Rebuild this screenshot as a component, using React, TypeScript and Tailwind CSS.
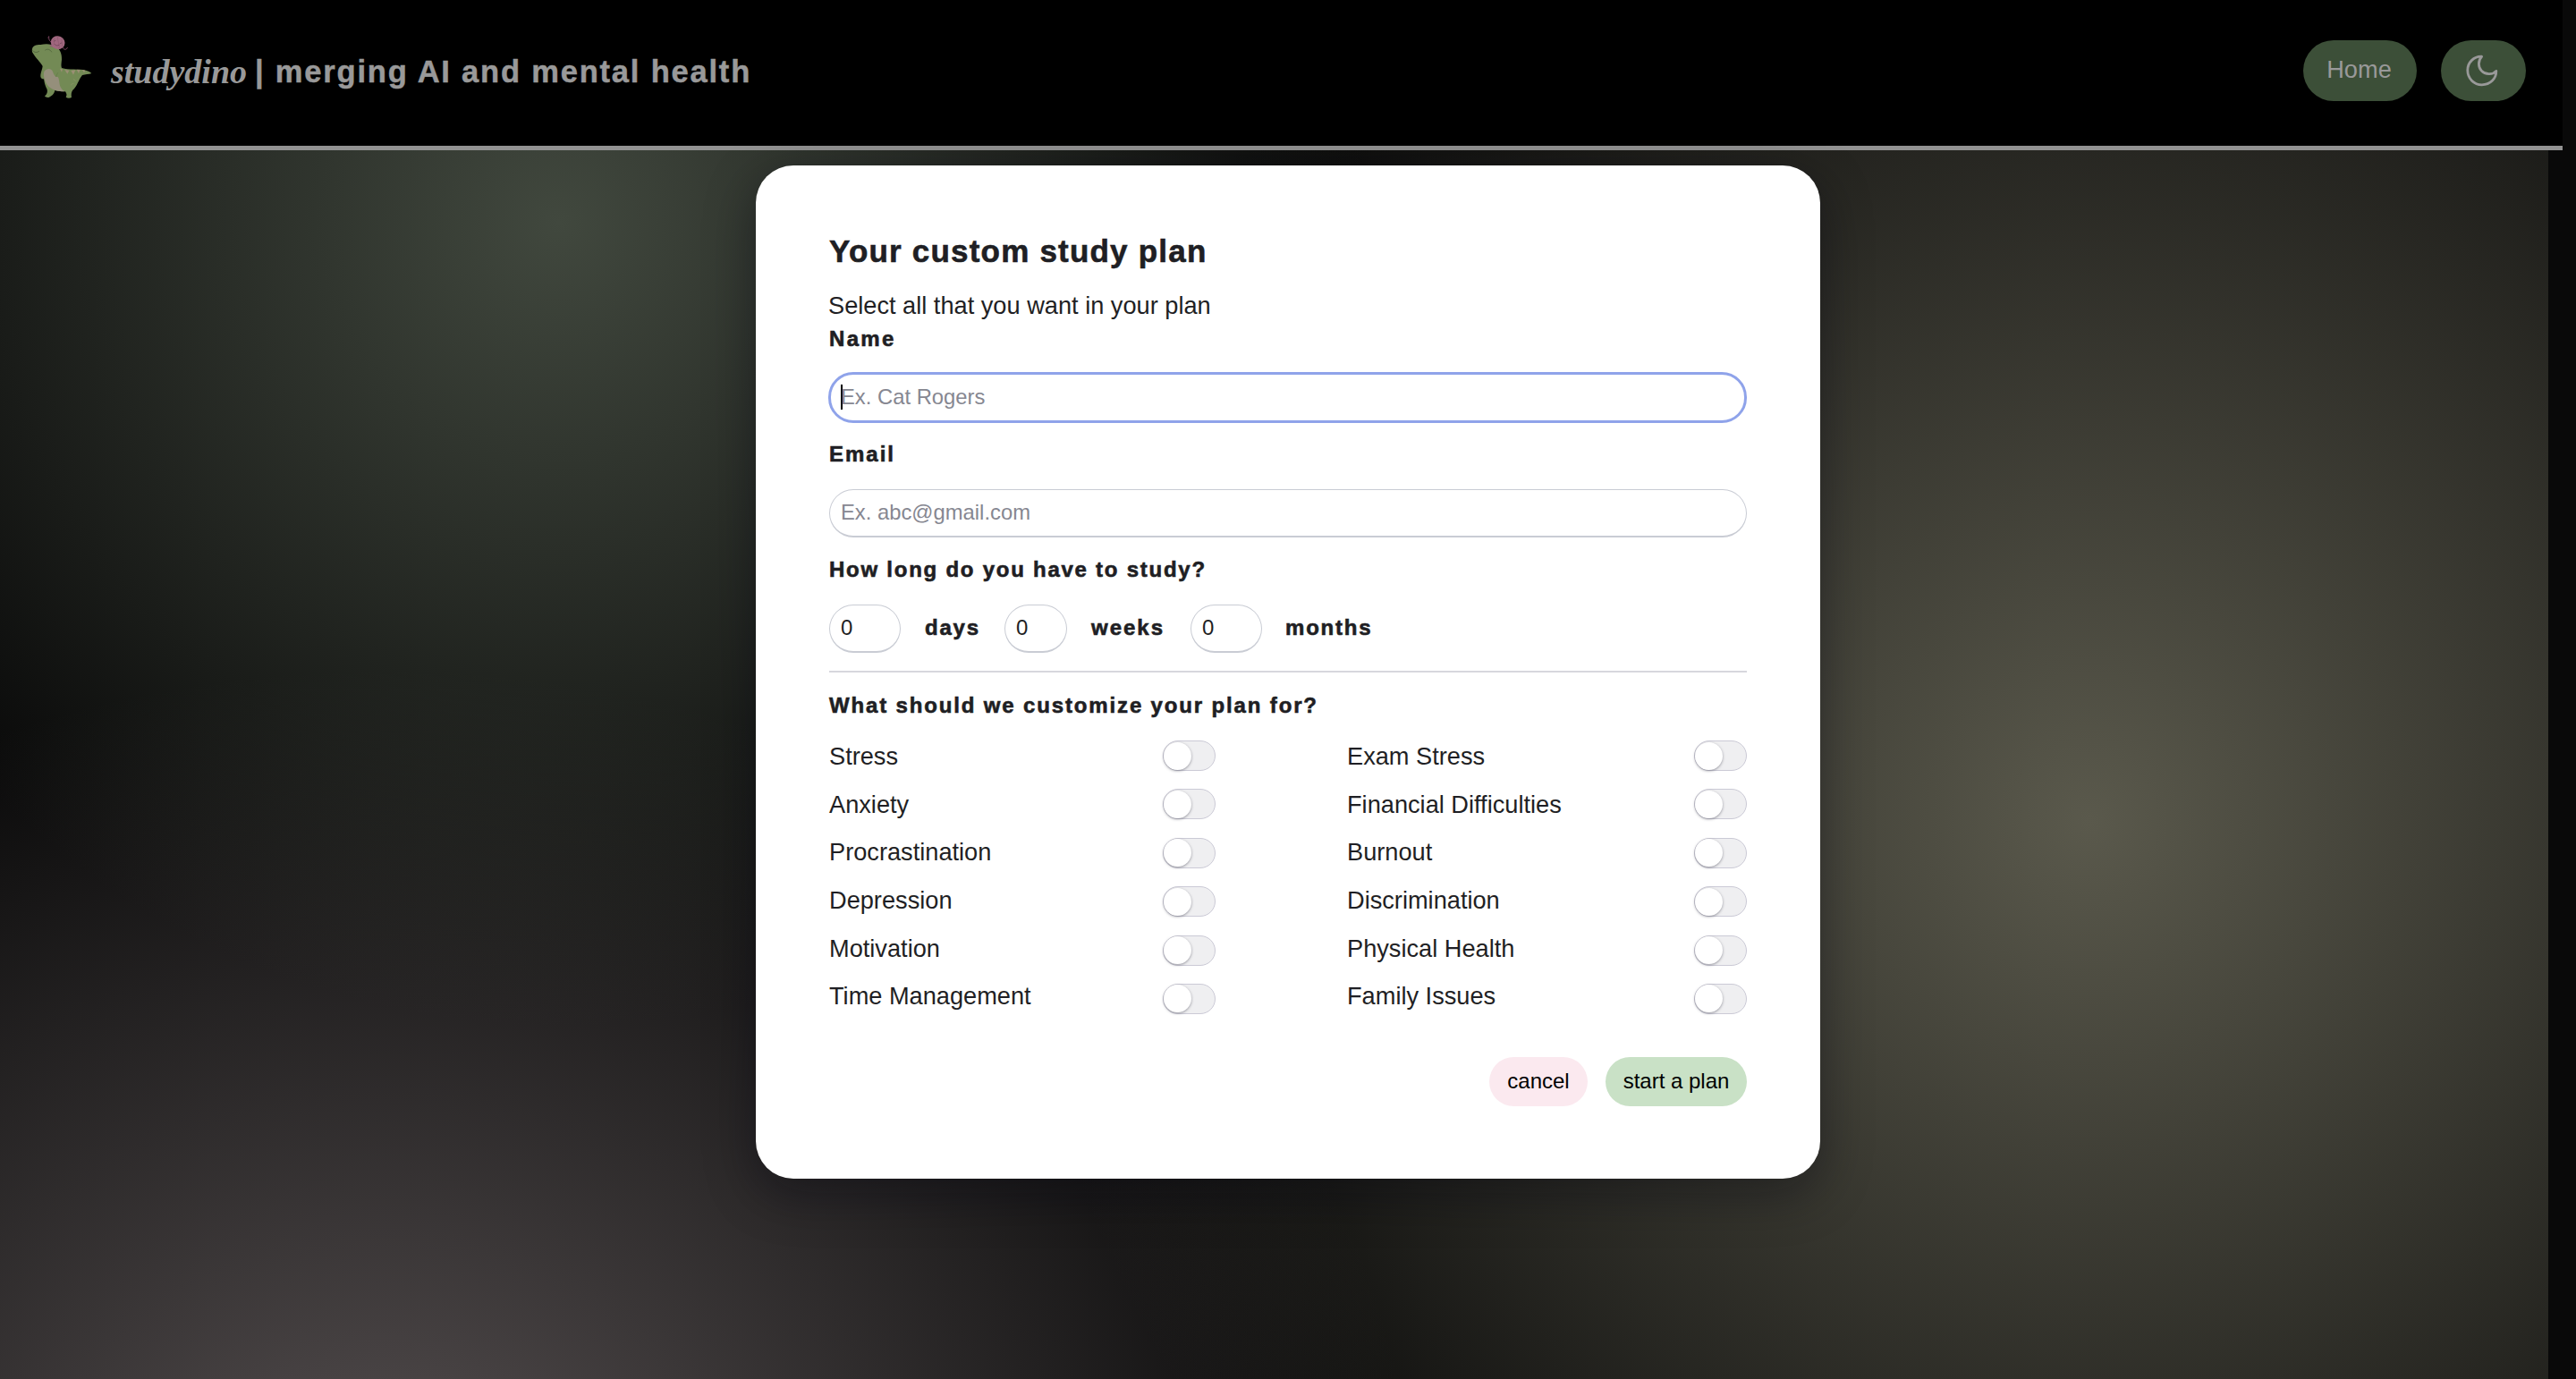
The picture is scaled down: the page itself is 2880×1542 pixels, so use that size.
import React from "react";

const leftTopics = ["Stress", "Anxiety", "Procrastination", "Depression", "Motivation", "Time Management"];
const rightTopics = ["Exam Stress", "Financial Difficulties", "Burnout", "Discrimination", "Physical Health", "Family Issues"];

function DinoLogo() {
  return (
    <svg className="h-[110px] w-[100px] shrink-0" viewBox="0 0 300 330" fill="none">
      <path
        d="M48 104C50 94 60 90 76 90C92 86 112 86 128 96C142 106 148 122 147 140C146 152 144 160 147 168C170 176 205 170 228 176C238 179 244 182 247 186C238 190 226 189 216 192C204 206 198 232 184 242C178 250 179 258 180 267C174 270 166 270 161 266C165 260 164 254 159 247C146 247 134 246 124 243C123 252 115 262 105 266C99 268 92 266 90 262C97 258 101 248 97 238C90 226 88 210 87 205C80 206 75 202 76 192C77 182 82 172 83 162C76 150 58 132 50 118C47 113 47 108 48 104Z"
        fill="#738a55"
      />
      <path
        d="M88 180C96 168 112 168 117 180C120 190 126 200 134 198C140 206 138 222 143 232C147 240 152 244 158 247C142 247 128 245 118 240C104 234 94 222 90 208C86 196 86 188 88 180Z"
        fill="#958f7b"
      />
      <path d="M141 170L150 172L147 182ZM157 174L172 176L166 188ZM178 177L193 175L186 191ZM197 173L209 174L204 187ZM216 174L226 176L222 184Z" fill="#9a8f74" />
      <path d="M177 226C181 222 184 220 187 220M186 205L194 212" stroke="#8f9569" strokeWidth="2" />
      <path d="M134 184C130 190 130 196 126 198" stroke="#5f7747" strokeWidth="2" />
      <path d="M50 110C55 117 64 117 71 112" stroke="#4e633b" strokeWidth="2.5" strokeLinecap="round" />
      <path d="M92 108C98 103 108 105 113 114" stroke="#4e633b" strokeWidth="2.5" strokeLinecap="round" />
      <path d="M110 90L130 94L140 104L124 99L106 96Z" fill="#8d6470" />
      <ellipse cx="134" cy="83" rx="24" ry="22" transform="rotate(25 134 83)" fill="#a0677f" />
      <path d="M134 62C130 75 142 88 138 104M122 68C118 76 124 84 120 92M148 70C144 80 152 88 148 96" stroke="#8b576d" strokeWidth="2" />
      <path d="M124 89C128 94 134 94 138 91M122 78L126 76M142 86L146 84" stroke="#653c4e" strokeWidth="2" strokeLinecap="round" />
      <path d="M110 80C105 76 103 70 104 63M104 63L101 66M150 100C155 108 163 108 166 100" stroke="#7d4560" strokeWidth="3" strokeLinecap="round" />
    </svg>
  );
}

function Labels({ items }: { items: string[] }) {
  return (
    <div className="flex flex-col">
      {items.map((t) => (
        <div key={t} className="h-[53.7px] text-[27.2px] leading-[53.7px] whitespace-nowrap">
          {t}
        </div>
      ))}
    </div>
  );
}

function Switches({ items }: { items: string[] }) {
  return (
    <div className="flex flex-col gap-[20.4px] pt-[9px]">
      {items.map((t) => (
        <div
          key={t}
          role="switch"
          aria-checked={false}
          aria-label={t}
          className="flex h-[34px] w-[59px] items-center rounded-full border border-[#cbcad6] bg-[#efeff1]"
        >
          <div className="size-[31px] shrink-0 rounded-full bg-white shadow-[0_1px_3px_rgba(60,60,75,0.5)]" />
        </div>
      ))}
    </div>
  );
}

function NumberField({ className }: { className: string }) {
  return (
    <div className={"flex h-[54px] items-center rounded-[27px] border border-b-2 border-[#c9ccd4] pb-0.5 pl-[12px] text-[24px] leading-none tracking-normal " + className}>
      0
    </div>
  );
}

const heading = "font-bold [-webkit-text-stroke:0.6px_#1c1c21]";

export default function App() {
  return (
    <div className="relative h-[1542px] w-[2880px] overflow-hidden bg-[#090909] font-['Liberation_Sans',Arial,sans-serif] text-[#1f1f24]">
      <header className="flex h-[168px] w-[2865px] items-start border-b-[5px] border-[#929292] bg-black">
        <div className="flex h-[150px] items-start pt-5 pl-5">
          <DinoLogo />
          <h1 className="flex pt-[40px] pl-[4px] leading-[40px] whitespace-nowrap text-[#999999]">
            <span className="w-[161px] font-['Liberation_Serif',serif] text-[38px] font-bold italic">studydino</span>
            <span className="text-[34.5px] font-bold tracking-[1.8px] [-webkit-text-stroke:0.5px_#999999]">| merging AI and mental health</span>
          </h1>
        </div>
        <nav className="ml-auto flex gap-[27px] pt-[45px] pr-[41px]">
          <button className="h-[68px] w-[127px] rounded-[34px] bg-[#3c4f38] pr-[2px] pb-[2px] text-[27.2px] text-[#999999]">Home</button>
          <button className="flex h-[68px] w-[95px] items-center justify-center rounded-[34px] bg-[#3c4f38] pr-[3px]">
            <svg className="size-[38px]" viewBox="0 0 38 38" fill="none" stroke="#999999" strokeWidth="2.8" strokeLinejoin="round">
              <path d="M18.6 3.2C10 2.8 2.8 9.6 2.8 18.6C2.8 28 10 34.8 18.8 34.8C28 34.8 35 28 34.8 19.4C33 21.6 29.6 22.8 26.4 22.6C19.6 22.4 15.4 17.2 15.4 11.4C15.4 8.2 16.6 5.2 18.6 3.2Z" />
            </svg>
          </button>
        </nav>
      </header>

      <div className="h-[1374px] w-[2849px] bg-[#090909] bg-[radial-gradient(ellipse_900px_900px_at_625px_80px,rgb(65,72,62),rgba(65,72,62,0)),radial-gradient(ellipse_1200px_1200px_at_2336px_750px,rgb(90,89,76),rgba(90,89,76,0)),radial-gradient(ellipse_1150px_950px_at_430px_1532px,rgb(84,78,79),rgba(80,76,80,0))]" />

      <main className="absolute top-[185px] left-[845px] flex h-[1133px] w-[1190px] flex-col rounded-[42px] bg-white px-[82px] pt-[76px] shadow-[0_16px_56px_rgba(5,5,16,0.4)]">
        <h2 className={"text-[35px] leading-[40px] tracking-[1.2px] whitespace-nowrap " + heading}>Your custom study plan</h2>
        <p className="mt-[23px] -ml-px text-[27.2px] leading-[36px] whitespace-nowrap">Select all that you want in your plan</p>

        <label className={"mt-[3px] text-[24px] leading-[32px] tracking-[2.3px] " + heading}>Name</label>
        <div className="mt-[21px] -ml-px flex h-[57px] items-center rounded-[28px] border-[3px] border-[#8fa3ea] pb-0.5 pl-[11px] text-[23.8px] leading-none text-[#868791]">
          <div className="-mr-0.5 h-[28px] w-0.5 bg-black" />
          Ex. Cat Rogers
        </div>

        <label className={"mt-[19px] text-[24px] leading-[32px] tracking-[2px] " + heading}>Email</label>
        <div className="mt-[23px] flex h-[54px] items-center rounded-[27px] border border-b-2 border-[#c9ccd4] pb-0.5 pl-[12px] text-[23.8px] leading-none text-[#868791]">
          Ex. abc@gmail.com
        </div>

        <label className={"mt-5 text-[24px] leading-[32px] tracking-[1.75px] " + heading}>How long do you have to study?</label>
        <div className="mt-[23px] flex h-[54px] items-center text-[24px]">
          <NumberField className="w-[80px]" />
          <span className={"ml-[27px] w-[89px] pb-[2px] tracking-[1.8px] " + heading}>days</span>
          <NumberField className="w-[70px]" />
          <span className={"ml-[27px] w-[111px] pb-[2px] tracking-[2px] " + heading}>weeks</span>
          <NumberField className="w-[80px]" />
          <span className={"ml-[26px] pb-[2px] tracking-[1.8px] " + heading}>months</span>
        </div>

        <div className="mt-5 h-0.5 w-full shrink-0 bg-[#d7d7dd]" />

        <label className={"mt-[21px] text-[24px] leading-[32px] tracking-[1.85px] " + heading}>What should we customize your plan for?</label>
        <div className="mt-[14px] grid h-[322px] grid-cols-[373px_206px_388px_59px]">
          <Labels items={leftTopics} />
          <Switches items={leftTopics} />
          <Labels items={rightTopics} />
          <Switches items={rightTopics} />
        </div>

        <div className="mt-[41px] flex justify-end gap-5 text-[24px] text-black">
          <button className="h-[55px] w-[110px] rounded-[27.5px] bg-[#fbe9ef] pb-[2px]">cancel</button>
          <button className="h-[55px] w-[158px] rounded-[27.5px] bg-[#c9e1c6] pb-[2px]">start a plan</button>
        </div>
      </main>
    </div>
  );
}
